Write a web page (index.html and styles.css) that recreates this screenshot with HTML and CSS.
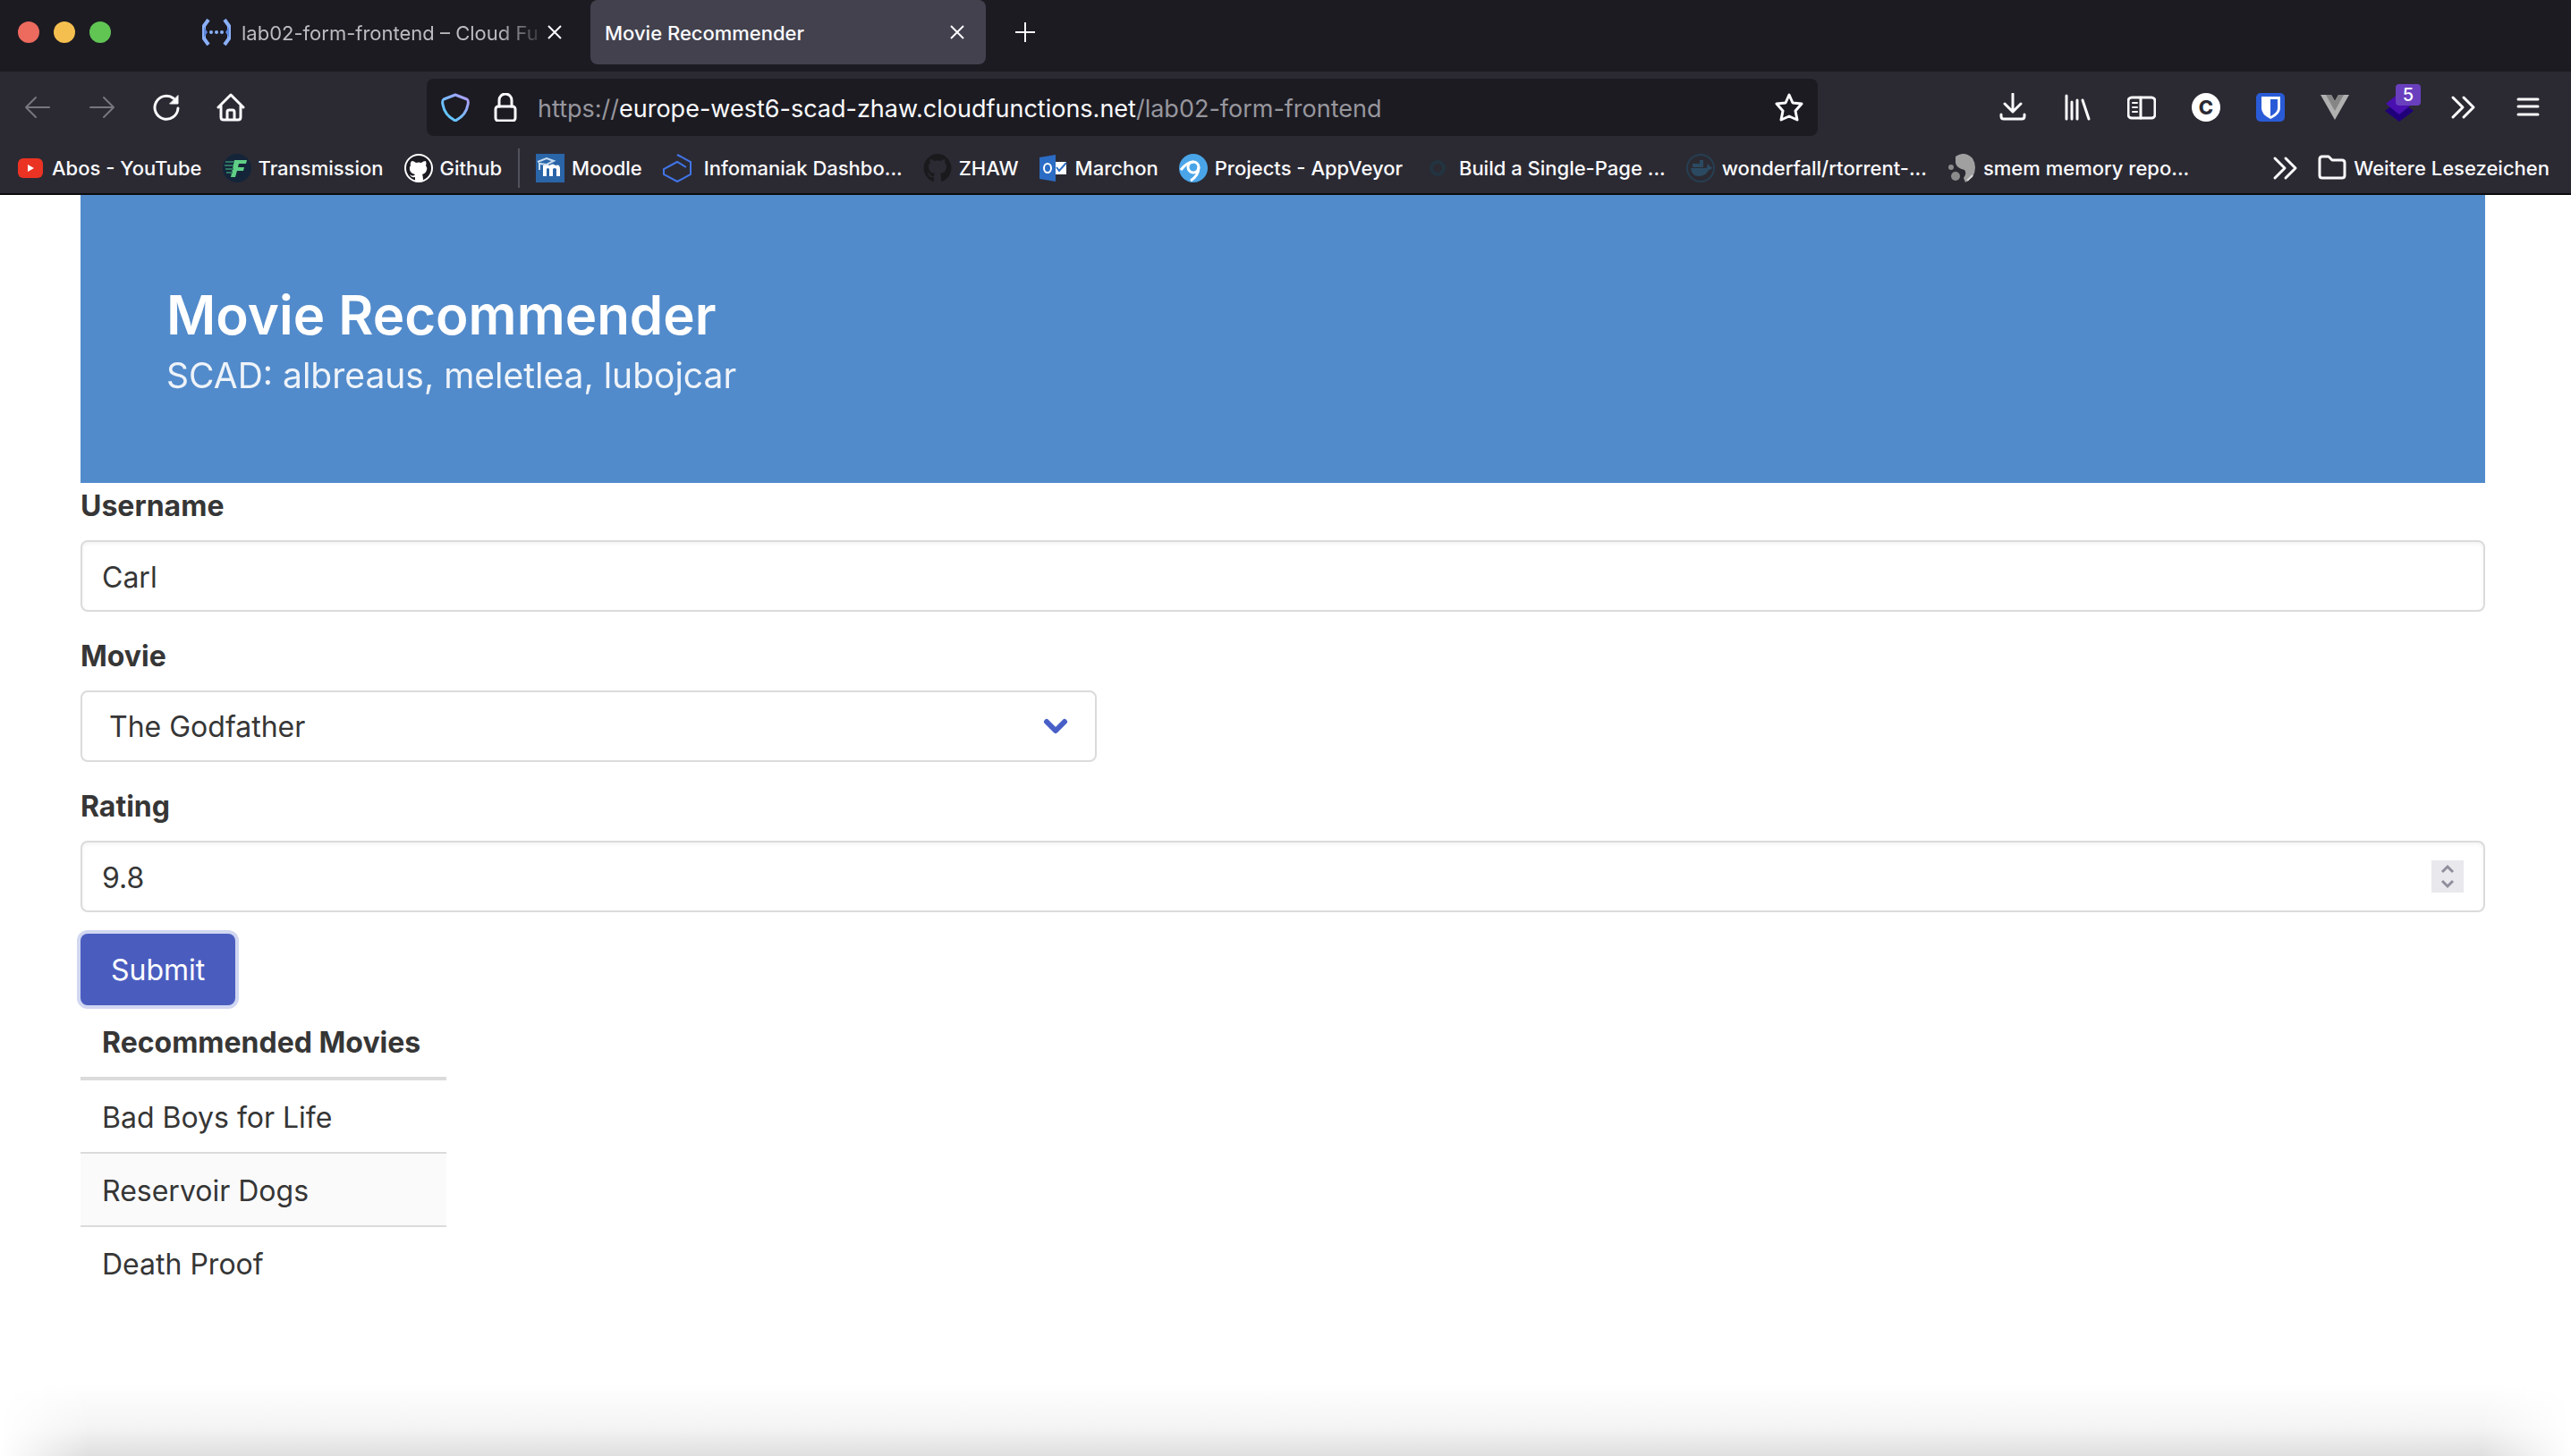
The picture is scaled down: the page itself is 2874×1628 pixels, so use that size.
FILE: index.html
```html
<!DOCTYPE html>
<html lang="de">
<head>
<meta charset="utf-8">
<title>Movie Recommender</title>
<link rel="stylesheet" href="styles.css">
</head>
<body>
<header class="browser">
  <div class="tabstrip">
    <div class="lights"><span class="light red"></span><span class="light yellow"></span><span class="light green"></span></div>
    <div class="tab">
      <svg class="icon" viewBox="0 0 32 32"><path d="M7 2 2 9v14l5 7M25 2l5 7v14l-5 7" fill="none" stroke="#8ab0f8" stroke-width="4"/><path d="M2 10v12l4-6zM30 10v12l-4-6z" fill="#5c85de"/><circle cx="10" cy="16" r="2" fill="#8ab0f8"/><circle cx="16" cy="16" r="2" fill="#8ab0f8"/><circle cx="22" cy="16" r="2" fill="#8ab0f8"/></svg>
      <span class="tab-title faded">lab02-form-frontend – Cloud Fu</span>
      <button class="close" aria-label="Tab schließen"><svg viewBox="0 0 16 16"><path d="M1 1l14 14M15 1 1 15"/></svg></button>
    </div>
    <div class="tab active">
      <span class="tab-title">Movie Recommender</span>
      <button class="close" aria-label="Tab schließen"><svg viewBox="0 0 16 16"><path d="M1 1l14 14M15 1 1 15"/></svg></button>
    </div>
    <button class="newtab" aria-label="Neuer Tab"><svg viewBox="0 0 24 24"><path d="M12 1v22M1 12h22"/></svg></button>
  </div>
  <div class="toolbar">
    <div class="nav">
      <button class="tool dim" aria-label="Zurück"><svg class="icon line" viewBox="0 0 32 32"><path d="M29 16H3M14 5 3 16l11 11"/></svg></button>
      <button class="tool dim" aria-label="Vor"><svg class="icon line" viewBox="0 0 32 32"><path d="M3 16h26M18 5l11 11-11 11"/></svg></button>
      <button class="tool" aria-label="Neu laden"><svg class="icon line thick" viewBox="0 0 32 32"><path d="M29 17a13 13 0 1 1-5-11"/><path d="M29 3v9h-9z" fill="#fbfbfe" stroke-width="1"/></svg></button>
      <button class="tool" aria-label="Startseite"><svg class="icon line thick" viewBox="0 0 32 32"><path d="M2 16 16 2l14 14M5 14v13q0 3 3 3h16q3 0 3-3V14M12 30v-9q0-2 2-2h4q2 0 2 2v9"/></svg></button>
    </div>
    <div class="urlbar">
      <svg class="icon" viewBox="0 0 32 32"><defs><linearGradient id="shield" x1="0" y1="1" x2="1" y2="0"><stop offset="0" stop-color="#4fd0ff"/><stop offset=".5" stop-color="#7cb8ff"/><stop offset="1" stop-color="#b79bf5"/></linearGradient></defs><path d="M16 2 29 7q2 1 1 6-2 12-14 18Q4 25 2 13 1 8 3 7z" fill="none" stroke="url(#shield)" stroke-width="3" stroke-linejoin="round"/></svg>
      <svg class="icon line thick" viewBox="0 0 32 32"><rect x="5" y="15" width="22" height="16" rx="3"/><path d="M9 15V8a7 7 0 0 1 14 0v7"/></svg>
      <div class="url">https://<b>europe-west6-scad-zhaw.cloudfunctions.net</b>/lab02-form-frontend</div>
      <svg class="icon line thick" viewBox="0 0 32 32"><path d="m16 2 4 9 10 1-7 8 2 10-9-4-9 4 2-10-7-8 10-1z"/></svg>
    </div>
    <div class="tools">
      <button class="tool" aria-label="Downloads"><svg class="icon line thick" viewBox="0 0 32 32"><path d="M16 1v20M7 12l9 9 9-9M3 24v2q0 3 3 3h20q3 0 3-3v-2"/></svg></button>
      <button class="tool" aria-label="Bibliothek"><svg class="icon line thick" viewBox="0 0 32 32"><path d="M4 3v26M10 10v19M16 8v21M22 8l7 21"/></svg></button>
      <button class="tool" aria-label="Seitenleiste"><svg class="icon line thick" viewBox="0 0 32 32"><rect x="1" y="5" width="30" height="23" rx="4"/><path d="M15 5v23"/><path d="M6 11h5M6 16h5M6 21h5" stroke-width="2"/></svg></button>
      <button class="tool" aria-label="Erweiterung C"><span class="disc">C</span></button>
      <button class="tool" aria-label="Bitwarden"><svg class="icon" viewBox="0 0 32 32"><rect width="32" height="32" rx="5" fill="#2a5bd7"/><path d="M6 4h21v13q0 7-11 12Q6 24 6 17z" fill="#fff"/><path d="M16 7h8v10q0 5-8 9z" fill="#2a5bd7"/></svg></button>
      <button class="tool" aria-label="Vue"><svg class="icon" viewBox="0 0 32 32"><path d="M0 2h12l4 7 4-7h12L16 30z" fill="#b0b0b0"/><path d="M6 2h6l4 7 4-7h6L16 20z" fill="#858585"/></svg></button>
      <button class="tool" aria-label="Erweiterung, 5"><svg class="icon" viewBox="0 0 32 32"><path d="M0 20 16 8l16 12-16 12z" fill="#20007a"/><path d="M1 12 16 0l15 12-15 12z" fill="#4a0fb0"/></svg><span class="badge">5</span></button>
      <button class="tool" aria-label="Mehr"><svg class="icon line thick" viewBox="0 0 32 32"><path d="m4 5 11 11L4 27M16 5l11 11-11 11"/></svg></button>
      <button class="tool" aria-label="Menü"><svg class="icon line thick" viewBox="0 0 32 32"><path d="M5 7h22M5 15h22M5 24h22"/></svg></button>
    </div>
  </div>
  <nav class="bookmarks">
    <a href="#"><svg class="icon" viewBox="0 0 32 32"><rect x="2" y="5" width="28" height="22" rx="6" fill="#eb3323"/><path d="m13 12 7 4-7 4z" fill="#fff"/></svg>Abos - YouTube</a>
    <a href="#"><svg class="icon" viewBox="0 0 32 32"><circle cx="16" cy="16" r="16" fill="#14253a"/><path d="M13 7h14l-1 4h-8l-1 4h7l-1 4h-7l-2 7h-5z" fill="#5fcf86"/><path d="M3 9h10M2 13h10M3 17h9M4 21h7" stroke="#2e7560" stroke-width="2"/></svg>Transmission</a>
    <a href="#"><svg class="icon" viewBox="0 0 32 32"><circle cx="16" cy="16" r="15" fill="#1c1b22" stroke="#fff" stroke-width="2"/><path d="M8 8q3 0 5 2 3-1 6 0 2-2 5-2 1 3 0 5 2 3 1 5-1 4-5 5 1 2 1 8h-9v-5q-4 1-6-3 4 3 6 0-5-1-6-5-1-3 1-5-1-2 1-5z" fill="#fff"/></svg>Github</a>
    <span class="divider"></span>
    <a href="#"><svg class="icon" viewBox="0 0 32 32"><rect width="32" height="32" fill="#2a65a8"/><path d="M8 25V13q4-3 7 0 4-3 7 0 5-2 5 4v8h-4v-8q-2-2-4 0v8h-4v-8q-2-2-3 0v8z" fill="#fff"/><path d="m2 9 10-4 8 3-8 4-8-1v7" fill="none" stroke="#c8dcf0" stroke-width="2"/></svg>Moodle</a>
    <a href="#"><svg class="icon" viewBox="0 0 32 32"><path d="m16 1 15 8v14l-15 8-15-8V17L16 9l10 6" fill="none" stroke="#4175e8" stroke-width="2"/></svg>&nbsp;Infomaniak Dashbo...</a>
    <a href="#"><svg class="icon" viewBox="0 0 32 32"><path d="M16 0a16 16 0 0 0-5 31q1 0 1-1v-4q-5 1-6-3l-2-2q3 0 4 3 2 2 4 1l1-3q-7-1-7-8 0-3 2-4-1-2 0-4 2 0 4 2 4-1 8 0 2-2 4-2 1 2 0 4 2 1 2 4 0 7-7 8 1 1 1 3v5q0 1 1 1A16 16 0 0 0 16 0z" fill="#1a1a1d"/></svg>ZHAW</a>
    <a href="#"><svg class="icon" viewBox="0 0 32 32"><path d="M0 4 18 1v30L0 28z" fill="#2b6cc4"/><path d="M18 9h12v14H18z" fill="#fff"/><path d="m19 15 3 4 8-9" fill="none" stroke="#2b6cc4" stroke-width="2"/><ellipse cx="9" cy="16" rx="4" ry="5" fill="none" stroke="#fff" stroke-width="2"/></svg>Marchon</a>
    <a href="#"><svg class="icon" viewBox="0 0 32 32"><circle cx="16" cy="16" r="16" fill="#4aa5e8"/><circle cx="16" cy="15" r="6" fill="none" stroke="#fff" stroke-width="3"/><path d="M2 18q7-9 14-9M22 15q0 9-9 15" fill="none" stroke="#fff" stroke-width="3"/></svg>Projects - AppVeyor</a>
    <a href="#"><svg class="icon" viewBox="0 0 32 32"><circle cx="16" cy="16" r="7" fill="none" stroke="#223440" stroke-width="4"/></svg>Build a Single-Page ...</a>
    <a href="#"><svg class="icon" viewBox="0 0 32 32"><circle cx="16" cy="16" r="15" fill="none" stroke="#263f52" stroke-width="2"/><path d="M5 16h18q0-4 2-5l1 3 3 1q-1 3-4 3-3 7-11 7-8 0-9-9zM7 11h12v4H7zM15 7h4v4h-4z" fill="#2b4a62"/></svg>wonderfall/rtorrent-...</a>
    <a href="#"><svg class="icon" viewBox="0 0 32 32"><path d="M9 3q10-7 19 2 6 10 0 21l-8 6-2-5q4-5 1-9-9-2-10-8z" fill="#a0a0a0"/><path d="m22 30 6-6" stroke="#d8d8d8" stroke-width="2"/><circle cx="4" cy="15" r="3" fill="#8b8b8b"/><circle cx="9" cy="25" r="5" fill="#8b8b8b"/></svg>smem memory repo...</a>
    <div class="bookmarks-end">
      <button class="plain" aria-label="Weitere anzeigen"><svg class="icon line thick" viewBox="0 0 32 32"><path d="m4 5 11 11L4 27M16 5l11 11-11 11"/></svg></button>
      <a href="#"><svg class="icon line thick" viewBox="0 0 32 32"><path d="M2 6q0-3 3-3h7l4 4h11q3 0 3 3v14q0 3-3 3H5q-3 0-3-3z"/></svg>Weitere Lesezeichen</a>
    </div>
  </nav>
</header>
<main class="page">
  <section class="hero">
    <h1>Movie Recommender</h1>
    <p>SCAD: albreaus, meletlea, lubojcar</p>
  </section>
  <form class="form">
    <div class="field">
      <label for="username">Username</label>
      <input id="username" class="input" type="text" value="Carl">
    </div>
    <div class="field">
      <label for="movie">Movie</label>
      <div class="select">
        <select id="movie"><option>The Godfather</option></select>
        <svg class="chevron" viewBox="0 0 28 18"><path d="m4 4 10 10L24 4"/></svg>
      </div>
    </div>
    <div class="field">
      <label for="rating">Rating</label>
      <div class="number">
        <input id="rating" class="input" type="number" step="0.1" value="9.8">
        <svg class="spinner" viewBox="0 0 36 36"><path d="m12 13 6-6 6 6M12 23l6 6 6-6"/></svg>
      </div>
    </div>
    <button class="submit" type="button">Submit</button>
  </form>
  <table class="movies">
    <thead><tr><th>Recommended Movies</th></tr></thead>
    <tbody>
      <tr><td>Bad Boys for Life</td></tr>
      <tr><td>Reservoir Dogs</td></tr>
      <tr><td>Death Proof</td></tr>
    </tbody>
  </table>
</main>
<div class="dock-shadow"></div>
</body>
</html>
```
FILE: styles.css
```css
* { box-sizing: border-box; }
body {
  margin: 0;
  min-height: 100vh;
  display: flex;
  flex-direction: column;
  font-family: Inter, "Liberation Sans", sans-serif;
  color: #363636;
  background: #fff;
}
button { padding: 0; border: 0; background: none; color: inherit; font: inherit; }
svg { display: block; flex: none; }
a { color: inherit; text-decoration: none; }

/* browser chrome */
.browser { background: #2b2a33; color: #fbfbfe; border-bottom: 2px solid #0c0c0d; }
.icon { width: 32px; height: 32px; }
.line { fill: none; stroke: currentColor; stroke-width: 2; stroke-linecap: round; stroke-linejoin: round; }
.thick { stroke-width: 3; }

.tabstrip { display: flex; height: 80px; background: #1c1b22; font-size: 22px; }
.lights { display: flex; gap: 16px; padding: 24px 0 0 20px; width: 210px; }
.light { width: 24px; height: 24px; border-radius: 50%; }
.red { background: #ed6a5e; }
.yellow { background: #f5bf4f; }
.green { background: #61c554; }
.tab { display: flex; align-items: center; width: 442px; height: 72px; margin-right: 8px; padding: 0 24px 0 16px; border-radius: 8px; }
.tab-title { flex: 1; padding-top: 2px; white-space: nowrap; }
.tab .icon { margin-right: 12px; }
.faded { color: #bcbcc0; -webkit-mask-image: linear-gradient(90deg, #000 84%, transparent); mask-image: linear-gradient(90deg, #000 84%, transparent); }
.active { background: #42414d; font-weight: 500; }
.close svg { width: 16px; height: 16px; stroke: currentColor; stroke-width: 2; }
.newtab { align-self: flex-start; height: 72px; margin-left: 24px; }
.newtab svg { width: 24px; height: 24px; stroke: currentColor; stroke-width: 2; }

.toolbar { display: flex; align-items: center; height: 80px; padding: 0 12px 0 6px; }
.nav, .tools { display: flex; }
.tool { position: relative; display: grid; place-items: center; width: 72px; height: 64px; }
.dim { color: #77767d; }
.urlbar { flex: 1; display: flex; align-items: center; gap: 24px; height: 64px; margin: 0 182px 0 183px; padding: 0 16px; border-radius: 8px; background: #1c1b22; }
.url { flex: 1; padding-top: 2px; margin-left: -4px; font-size: 27px; color: #97969d; white-space: nowrap; }
.url b { font-weight: 400; color: #fbfbfe; }
.disc { width: 32px; height: 32px; border-radius: 50%; background: #fff; color: #2b2a33; font-size: 22px; font-weight: 800; line-height: 32px; }
.badge { position: absolute; top: 6px; right: 12px; width: 28px; height: 24px; border-radius: 4px; background: #6a3fbe; font-size: 20px; font-weight: 500; line-height: 24px; }

.bookmarks { display: flex; align-items: center; gap: 23px; height: 56px; padding: 0 24px 0 18px; font-size: 22px; font-weight: 500; white-space: nowrap; }
.bookmarks a { display: flex; align-items: center; gap: 8px; }
.divider { width: 2px; height: 44px; margin: 0 -5px; background: #52525e; }
.bookmarks-end { display: flex; gap: 20px; margin-left: auto; }

/* page */
.page { padding: 0 96px 0 90px; font-size: 32px; line-height: 48px; }
.hero { padding: 96px 96px 90px; background: #528bcb; color: #fff; }
.hero h1 { margin: 0; font-size: 60px; line-height: 76px; font-weight: 600; }
.hero p { margin: 0; font-size: 39px; line-height: 60px; opacity: .9; }
.field { margin-bottom: 24px; }
.field label { display: block; padding-top: 2px; margin-bottom: 14px; font-weight: 700; }
.input, .select select {
  display: block;
  width: 100%;
  height: 80px;
  padding: 2px 22px 0;
  border: 2px solid #dbdbdb;
  border-radius: 8px;
  background: #fff;
  color: #363636;
  font: inherit;
}
.input { box-shadow: inset 0 2px 4px rgba(10, 10, 10, .05); }
.select { position: relative; width: 1136px; max-width: 100%; }
.select select { appearance: none; padding: 2px 30px 0; }
.chevron { position: absolute; right: 32px; top: 31px; width: 28px; height: 18px; fill: none; stroke: #485fc7; stroke-width: 6; stroke-linecap: round; stroke-linejoin: round; }
.number { position: relative; }
.number .input { appearance: textfield; }
.spinner { position: absolute; right: 24px; top: 22px; width: 36px; height: 36px; background: #e9e9ed; fill: none; stroke: #8f8f9d; stroke-width: 3; }
.submit { display: block; height: 80px; padding: 2px 34px 0; border-radius: 8px; background: #4a5dbf; color: #fff; box-shadow: 0 0 0 4px rgba(72, 95, 199, .25); }
.movies { min-width: 409px; border-collapse: separate; border-spacing: 0; }
.movies th, .movies td { padding: 18px 24px 14px; text-align: left; }
.movies th { border-bottom: 4px solid #dbdbdb; }
.movies td { border-bottom: 2px solid #dbdbdb; }
.movies tr:nth-child(even) td { background: #fafafa; }
.movies tr:last-child td { border-bottom: 0; }
.dock-shadow {
  height: 80px;
  margin-top: auto;
  background: linear-gradient(to bottom, #fff, #f4f4f4 60%, #dfdfdf);
  -webkit-mask-image: linear-gradient(90deg, transparent, #000 100px calc(100% - 100px), transparent);
  mask-image: linear-gradient(90deg, transparent, #000 100px calc(100% - 100px), transparent);
}
```
